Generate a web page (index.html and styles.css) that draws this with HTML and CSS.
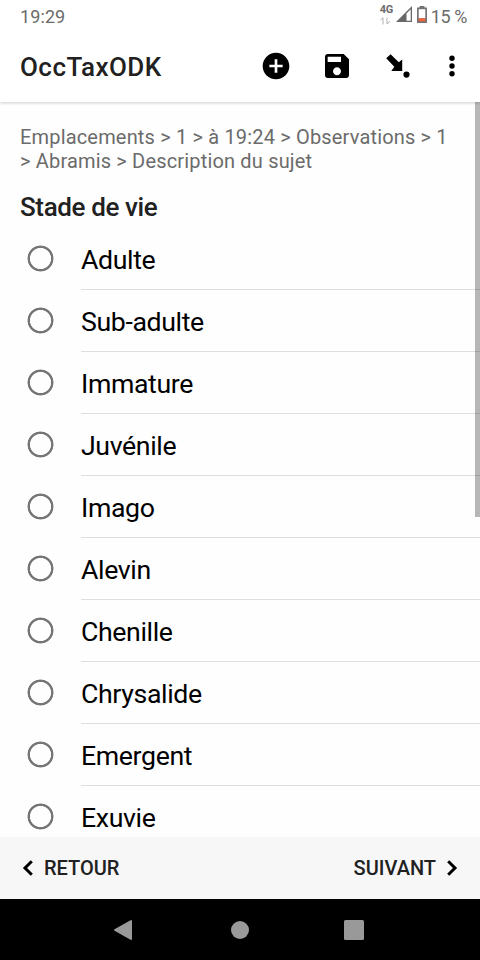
FILE: index.html
```html
<!DOCTYPE html>
<html lang="fr">
<head>
<meta charset="utf-8">
<title>OccTaxODK</title>
<link rel="stylesheet" href="styles.css">
</head>
<body>
<div class="screen">
  <div class="status">
    <span class="clock">19:29</span>
    <div class="indicators">
      <div class="network">
        <span>4G</span>
        <svg width="12" height="8" viewBox="0 0 12 8" fill="none" stroke="#b0b0b0"><path d="M.5 3 3 .8V7.500M7 .5V7l3-2.800"/></svg>
      </div>
      <svg class="signal" width="16" height="16" viewBox="0 0 16 16"><path d="M0 16 16 0V16Z" fill="#686868"/><path d="M10.500 7.500 14.700 3.300V14.700H10.500Z" fill="#fff"/></svg>
      <svg class="battery" width="10" height="17" viewBox="0 0 10 17"><path d="M2.500 0H7.500V1.500H10V17H0V1.500H2.500Z" fill="#747474"/><path d="M1.700 3.200H8.300V12.300H1.700Z" fill="#fff"/><path d="M1.700 12.300H8.300V15.300H1.700Z" fill="#f4623a"/></svg>
      <span class="percent">15 %</span>
    </div>
  </div>
  <header class="toolbar">
    <h1>OccTaxODK</h1>
    <div class="actions">
      <svg width="32" height="32" viewBox="0 0 24 24"><path d="M12 2C6.480 2 2 6.480 2 12s4.480 10 10 10 10-4.480 10-10S17.520 2 12 2zm5 11h-4v4h-2v-4H7v-2h4V7h2v4h4v2z"/></svg>
      <svg width="32" height="32" viewBox="0 0 24 24"><path d="M17 3H5c-1.110 0-2 .9-2 2v14c0 1.100.89 2 2 2h14c1.100 0 2-.9 2-2V7l-4-4zm-5 16c-1.660 0-3-1.340-3-3s1.340-3 3-3 3 1.340 3 3-1.340 3-3 3zm3-10H5V5h10v4z"/></svg>
      <svg width="32" height="32" viewBox="0 0 32 32"><path d="M4.200 8.300 8.600 4.200 16.800 12.200 20.200 9.500V20.900H9.300L12.300 16.800Z"/><circle cx="24.500" cy="24.600" r="3.100"/></svg>
      <svg class="more" width="8" height="32" viewBox="0 0 8 32"><circle cx="4" cy="8.300" r="2.700"/><circle cx="4" cy="16" r="2.700"/><circle cx="4" cy="23.700" r="2.700"/></svg>
    </div>
  </header>
  <main class="content">
    <p class="path">Emplacements &gt; 1 &gt; à 19:24 &gt; Observations &gt; 1<br><span>&gt; Abramis &gt; Description du sujet</span></p>
    <h2>Stade de vie</h2>
    <ul class="choices">
      <li><i class="radio"></i><span>Adulte</span></li>
      <li><i class="radio"></i><span>Sub-adulte</span></li>
      <li><i class="radio"></i><span>Immature</span></li>
      <li><i class="radio"></i><span>Juvénile</span></li>
      <li><i class="radio"></i><span>Imago</span></li>
      <li><i class="radio"></i><span>Alevin</span></li>
      <li><i class="radio"></i><span>Chenille</span></li>
      <li><i class="radio"></i><span>Chrysalide</span></li>
      <li><i class="radio"></i><span>Emergent</span></li>
      <li><i class="radio"></i><span>Exuvie</span></li>
    </ul>
    <div class="scrollbar"></div>
  </main>
  <footer class="pager">
    <div class="step"><svg width="11" height="16" viewBox="0 0 11 16"><path d="M9.800 1.300 3 8l6.800 6.700"/></svg><span>RETOUR</span></div>
    <div class="step"><span>SUIVANT</span><svg width="11" height="16" viewBox="0 0 11 16"><path d="M1.200 1.300 8 8l-6.800 6.700"/></svg></div>
  </footer>
  <nav class="system">
    <svg width="20" height="22" viewBox="0 0 20 22"><path d="M2 11 18 2V20Z" stroke="#999" stroke-width="2" stroke-linejoin="round"/></svg>
    <svg width="18" height="18" viewBox="0 0 18 18"><circle cx="9" cy="9" r="9"/></svg>
    <svg width="20" height="20" viewBox="0 0 20 20"><rect width="20" height="20" rx="1.500"/></svg>
  </nav>
</div>
</body>
</html>
```
FILE: styles.css
```css
* { box-sizing: border-box; }
body { margin: 0; background: #fff; font-family: Roboto, sans-serif; color: #212121; }
h1, h2, p, ul { margin: 0; padding: 0; font-weight: 500; }
svg { display: block; flex: none; }
.screen { width: 480px; height: 960px; display: flex; flex-direction: column; overflow: hidden; }
.status { height: 32px; flex: none; display: flex; justify-content: space-between; padding: 0 13px 0 20px; color: #6b6b6b; font-size: 18px; line-height: 34px; }
.indicators { display: flex; align-items: flex-start; }
.network { display: flex; flex-direction: column; gap: 2px; padding-top: 5px; width: 16px; }
.network span { font-size: 11px; line-height: 10px; font-weight: 700; letter-spacing: -.2px; }
.clock { letter-spacing: .1px; }
.signal { margin-top: 6px; }
.battery { margin: 6px 4px 0 5px; }
.percent { letter-spacing: -.4px; }
.toolbar { height: 70px; flex: none; display: flex; align-items: center; justify-content: space-between; padding: 0 24.5px 2px 20px; background: #fff; box-shadow: 0 1px 3px rgba(0,0,0,.2); clip-path: inset(0 0 -6px 0); position: relative; z-index: 1; }
h1 { font-size: 26px; line-height: 34px; letter-spacing: .45px; padding-top: 2px; }
.actions { display: flex; gap: 29px; fill: #000; }
.more { margin-left: 5px; }
.content { height: 735px; flex: none; position: relative; overflow: hidden; background: #fefefe; }
.path { padding: 23px 0 0 20px; font-size: 20px; line-height: 24px; font-weight: 400; letter-spacing: .17px; color: #6b6b6b; white-space: nowrap; }
h2 { padding: 17px 0 0 20px; font-size: 26px; line-height: 34px; letter-spacing: -.38px; }
.choices { list-style: none; padding-top: 4px; }
.choices li { height: 62px; display: flex; padding-left: 27px; color: #000; font-size: 26.7px; line-height: 64px; letter-spacing: -.37px; }
.radio { width: 27px; height: 27px; margin: 17px 27px 0 0; background: radial-gradient(circle, transparent 10.200px, #757575 10.900px 12.600px, transparent 13.300px); flex: none; }
.choices span { flex: 1; border-bottom: 1px solid #dedede; font-weight: 400; }
.scrollbar { position: absolute; right: 0; top: 0; width: 5px; height: 415px; background: rgba(0,0,0,.28); }
.pager { height: 62px; flex: none; background: #f7f7f7; display: flex; align-items: center; justify-content: space-between; padding: 0 22px; font-size: 20px; font-weight: 500; }
.step { display: flex; align-items: center; gap: 11px; }
.step:last-child { gap: 11px; }
.step path { fill: none; stroke: #000; stroke-width: 3; }
.system { height: 61px; flex: none; background: #000; display: grid; grid-template-columns: 114px 114px 114px; justify-content: center; justify-items: center; align-items: center; fill: #999; }
.system svg:first-child { margin-right: 6px; }
```
